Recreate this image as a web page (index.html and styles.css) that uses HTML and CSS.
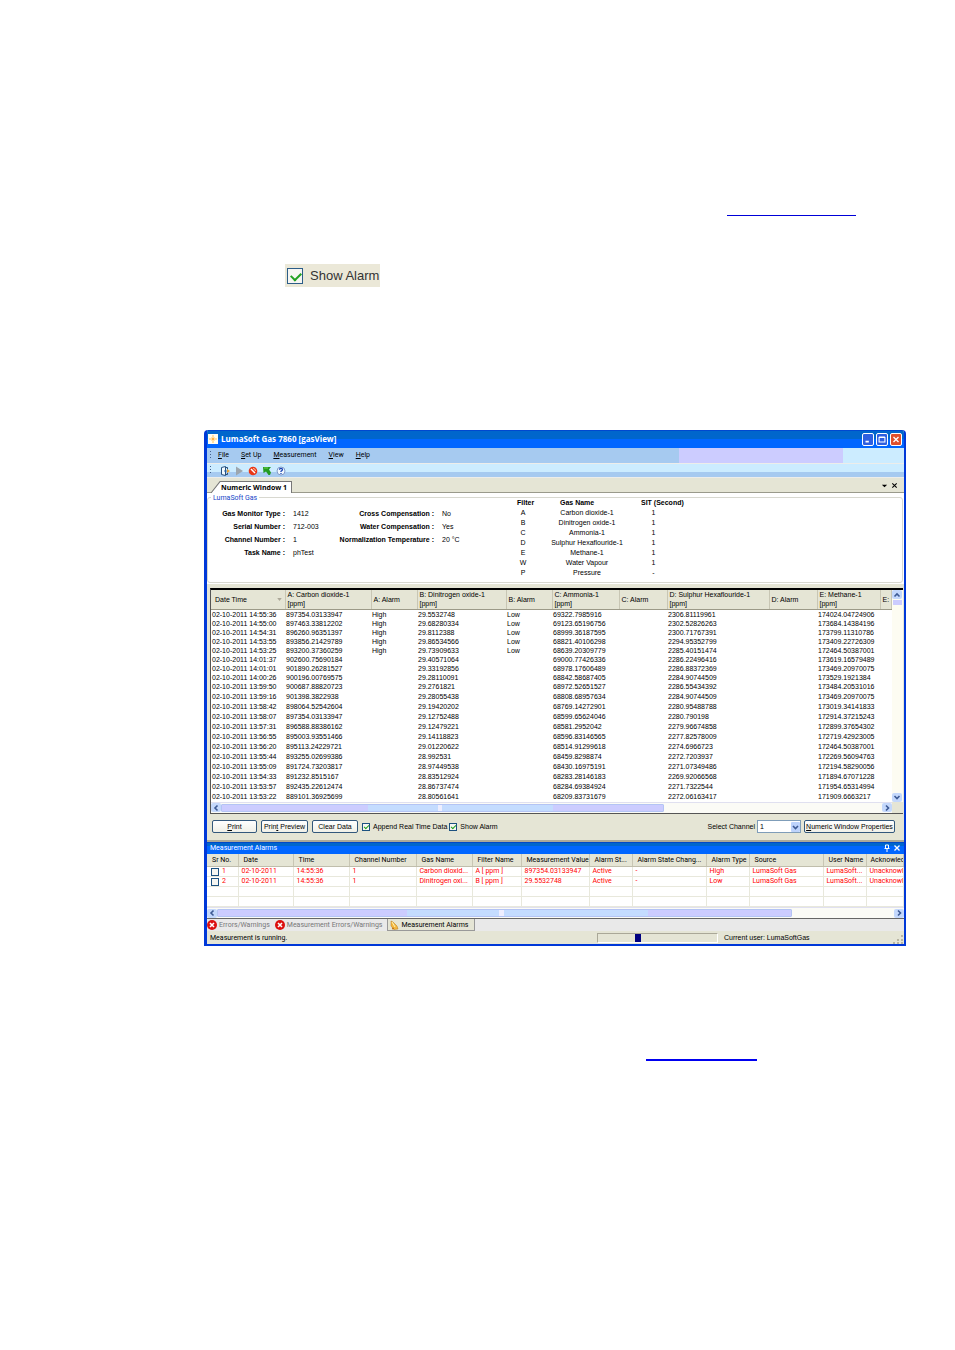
FILE: index.html
```html
<!DOCTYPE html>
<html lang="en">
<head>
<meta charset="utf-8">
<title>LumaSoft Gas 7860 [gasView]</title>
<link rel="stylesheet" href="styles.css">
</head>
<body>
<div class="page-link first"><a href="#numeric"></a></div>
<label class="sample"><input type="checkbox" class="check" checked>Show Alarm</label>

<main class="window" id="numeric">
  <header class="titlebar">
    <svg class="logo" viewBox="0 0 10 10"><rect width="10" height="10" fill="#fffdf0"/><path d="M5 1v8M1 5h8" stroke="#ffc45c"/><path d="M3 3l4 4M7 3L3 7" stroke="#ffe7b0"/><circle cx="5" cy="5" r="1" fill="#ff9d20"/></svg>
    <h1>LumaSoft Gas 7860 [gasView]</h1>
    <div class="win-buttons">
      <button class="win-btn"><svg viewBox="0 0 12 12"><path d="M3 8.500h4" stroke="#fff" stroke-width="2"/></svg></button>
      <button class="win-btn"><svg viewBox="0 0 12 12"><path d="M2.500 3.500h7v5.500h-7zM2.500 3h7" stroke="#fff" fill="none" stroke-width="1.300"/></svg></button>
      <button class="win-btn close"><svg viewBox="0 0 12 12"><path d="M3 3l6 6M9 3l-6 6" stroke="#fff" stroke-width="1.600"/></svg></button>
    </div>
  </header>

  <nav class="menubar">
    <i class="grip"></i>
    <button><u>F</u>ile</button><button><u>S</u>et Up</button><button><u>M</u>easurement</button><button><u>V</u>iew</button><button><u>H</u>elp</button>
    <span class="fill-lilac"></span><span class="fill-sky"></span>
  </nav>

  <div class="toolbar">
    <i class="grip"></i>
    <button><svg viewBox="0 0 10 10"><path d="M1.500 1.500l4-1v9l-4-1z" fill="#f4fbff" stroke="#28507c"/><path d="M6 1.500h1.500v2M7.500 7v1.500H6" stroke="#28507c" fill="none"/><path d="M4 5h4" stroke="#2c68b0"/><path d="M7 3l3 2-3 2z" fill="#e8a030"/></svg></button>
    <button><svg viewBox="0 0 10 10"><path d="M2 .5l7 4.500-7 4.500z" fill="#9da6ae"/></svg></button>
    <button><svg viewBox="0 0 10 10"><circle cx="5" cy="5" r="4.300" fill="#e93716"/><path d="M3 3l4 4" stroke="#fff" stroke-width="1.500"/><path d="M5 2.500a2.500 2.500 0 012.500 2.500" stroke="#ffc0a0" fill="none"/></svg></button>
    <button><svg viewBox="0 0 10 10"><path d="M1 1h8L7 3.500l2 3L8 9 6.500 9 4 5.500 1.500 7z" fill="#239b22"/><path d="M2 2h4" stroke="#72d34c"/></svg></button>
    <button><svg viewBox="0 0 10 10"><circle cx="5" cy="5" r="4" fill="#f2f8ff" stroke="#819bc8"/><path d="M3.500 3.800q0-1.500 1.500-1.500t1.500 1.300q0 .8-1.500 1.700v.7M5 7v1" stroke="#1945b4" stroke-width="1.300" fill="none"/></svg></button>
  </div>

  <div class="tabstrip">
    <button class="doc-tab"><svg viewBox="0 0 10 11" preserveAspectRatio="none"><path d="M0 11L9 .5h1V11z" fill="#fff"/><path d="M0 11L9 .5h1" stroke="#777" fill="none"/></svg><span>Numeric Window 1</span></button>
    <span class="strip-tools">
      <button><svg viewBox="0 0 8 8"><path d="M1 3h6L4 6z"/></svg></button>
      <button><svg viewBox="0 0 8 8"><path d="M1.500 1.500l5 5M6.500 1.500l-5 5" stroke="#000" stroke-width="1.200"/></svg></button>
    </span>
  </div>

  <fieldset class="info">
    <legend>LumaSoft Gas</legend>
    <dl class="facts">
      <dt>Gas Monitor Type :</dt><dd>1412</dd><dt>Cross Compensation :</dt><dd>No</dd>
      <dt>Serial Number :</dt><dd>712-003</dd><dt>Water Compensation :</dt><dd>Yes</dd>
      <dt>Channel Number :</dt><dd>1</dd><dt>Normalization Temperature :</dt><dd>20 °C</dd>
      <dt>Task Name :</dt><dd>phTest</dd>
    </dl>
    <table class="filters">
      <thead><tr><th>Filter</th><th>Gas Name</th><th>SIT (Second)</th></tr></thead>
      <tbody>
      <tr><td>A</td><td>Carbon dioxide-1</td><td>1</td></tr>
      <tr><td>B</td><td>Dinitrogen oxide-1</td><td>1</td></tr>
      <tr><td>C</td><td>Ammonia-1</td><td>1</td></tr>
      <tr><td>D</td><td>Sulphur Hexaflouride-1</td><td>1</td></tr>
      <tr><td>E</td><td>Methane-1</td><td>1</td></tr>
      <tr><td>W</td><td>Water Vapour</td><td>1</td></tr>
      <tr><td>P</td><td>Pressure</td><td>-</td></tr>
      </tbody>
    </table>
  </fieldset>

  <section class="panel">
    <div class="grid-box">
      <div class="grid-view">
      <table class="data">
        <colgroup><col class="w74"><col class="w86"><col class="w46"><col class="w89"><col class="w46"><col class="w67"><col class="w48"><col class="w102"><col class="w48"><col class="w63"><col></colgroup>
        <thead><tr><th><span class="sorted">Date Time <svg viewBox="0 0 6 4"><path d="M0 0h6L3 4z" fill="#aca899"/></svg></span></th><th>A: Carbon dioxide-1<br>[ppm]</th><th>A: Alarm</th><th>B: Dinitrogen oxide-1<br>[ppm]</th><th>B: Alarm</th><th>C: Ammonia-1<br>[ppm]</th><th>C: Alarm</th><th>D: Sulphur Hexaflouride-1<br>[ppm]</th><th>D: Alarm</th><th>E: Methane-1<br>[ppm]</th><th>E:</th></tr></thead>
        <tbody>
        <tr><td>02-10-2011 14:55:36</td><td>897354.03133947</td><td>High</td><td>29.5532748</td><td>Low</td><td>69322.7985916</td><td></td><td>2306.81119961</td><td></td><td>174024.04724906</td><td></td></tr>
        <tr><td>02-10-2011 14:55:00</td><td>897463.33812202</td><td>High</td><td>29.68280334</td><td>Low</td><td>69123.65196756</td><td></td><td>2302.52826263</td><td></td><td>173684.14384196</td><td></td></tr>
        <tr><td>02-10-2011 14:54:31</td><td>896260.96351397</td><td>High</td><td>29.8112388</td><td>Low</td><td>68999.36187595</td><td></td><td>2300.71767391</td><td></td><td>173799.11310786</td><td></td></tr>
        <tr><td>02-10-2011 14:53:55</td><td>893856.21429789</td><td>High</td><td>29.86534566</td><td>Low</td><td>68821.40106298</td><td></td><td>2294.95352799</td><td></td><td>173409.22726309</td><td></td></tr>
        <tr><td>02-10-2011 14:53:25</td><td>893200.37360259</td><td>High</td><td>29.73909633</td><td>Low</td><td>68639.20309779</td><td></td><td>2285.40151474</td><td></td><td>172464.50387001</td><td></td></tr>
        <tr><td>02-10-2011 14:01:37</td><td>902600.75690184</td><td></td><td>29.40571064</td><td></td><td>69000.77426336</td><td></td><td>2286.22496416</td><td></td><td>173619.16579489</td><td></td></tr>
        <tr><td>02-10-2011 14:01:01</td><td>901890.26281527</td><td></td><td>29.33192856</td><td></td><td>68978.17606489</td><td></td><td>2286.88372369</td><td></td><td>173469.20970075</td><td></td></tr>
        <tr><td>02-10-2011 14:00:26</td><td>900196.00769575</td><td></td><td>29.28110091</td><td></td><td>68842.58687405</td><td></td><td>2284.90744509</td><td></td><td>173529.1921384</td><td></td></tr>
        <tr><td>02-10-2011 13:59:50</td><td>900687.88820723</td><td></td><td>29.2761821</td><td></td><td>68972.52651527</td><td></td><td>2286.55434392</td><td></td><td>173484.20531016</td><td></td></tr>
        <tr><td>02-10-2011 13:59:16</td><td>901398.3822938</td><td></td><td>29.28055438</td><td></td><td>68808.68957634</td><td></td><td>2284.90744509</td><td></td><td>173469.20970075</td><td></td></tr>
        <tr><td>02-10-2011 13:58:42</td><td>898064.52542604</td><td></td><td>29.19420202</td><td></td><td>68769.14272901</td><td></td><td>2280.95488788</td><td></td><td>173019.34141833</td><td></td></tr>
        <tr><td>02-10-2011 13:58:07</td><td>897354.03133947</td><td></td><td>29.12752488</td><td></td><td>68599.65624046</td><td></td><td>2280.790198</td><td></td><td>172914.37215243</td><td></td></tr>
        <tr><td>02-10-2011 13:57:31</td><td>896588.88386162</td><td></td><td>29.12479221</td><td></td><td>68581.2952042</td><td></td><td>2279.96674858</td><td></td><td>172899.37654302</td><td></td></tr>
        <tr><td>02-10-2011 13:56:55</td><td>895003.93551466</td><td></td><td>29.14118823</td><td></td><td>68596.83146565</td><td></td><td>2277.82578009</td><td></td><td>172719.42923005</td><td></td></tr>
        <tr><td>02-10-2011 13:56:20</td><td>895113.24229721</td><td></td><td>29.01220622</td><td></td><td>68514.91299618</td><td></td><td>2274.6966723</td><td></td><td>172464.50387001</td><td></td></tr>
        <tr><td>02-10-2011 13:55:44</td><td>893255.02699386</td><td></td><td>28.992531</td><td></td><td>68459.8298874</td><td></td><td>2272.7203937</td><td></td><td>172269.56094763</td><td></td></tr>
        <tr><td>02-10-2011 13:55:09</td><td>891724.73203817</td><td></td><td>28.97449538</td><td></td><td>68430.16975191</td><td></td><td>2271.07349486</td><td></td><td>172194.58290056</td><td></td></tr>
        <tr><td>02-10-2011 13:54:33</td><td>891232.8515167</td><td></td><td>28.83512924</td><td></td><td>68283.28146183</td><td></td><td>2269.92066568</td><td></td><td>171894.67071228</td><td></td></tr>
        <tr><td>02-10-2011 13:53:57</td><td>892435.22612474</td><td></td><td>28.86737474</td><td></td><td>68284.69384924</td><td></td><td>2271.7322544</td><td></td><td>171954.65314994</td><td></td></tr>
        <tr><td>02-10-2011 13:53:22</td><td>889101.36925699</td><td></td><td>28.80561641</td><td></td><td>68209.83731679</td><td></td><td>2272.06163417</td><td></td><td>171909.6663217</td><td></td></tr>
        </tbody>
      </table>
      </div>
      <div class="vscroll">
        <button class="sb"><svg viewBox="0 0 8 8"><path d="M1.500 5.500L4 3l2.500 2.500" stroke="#3d5a94" stroke-width="1.600" fill="none"/></svg></button>
        <span class="vthumb"></span>
        <button class="sb low"><svg viewBox="0 0 8 8"><path d="M1.500 3L4 5.500 6.500 3" stroke="#3d5a94" stroke-width="1.600" fill="none"/></svg></button>
      </div>
      <div class="hscroll">
        <button class="sb"><svg viewBox="0 0 8 8"><path d="M5.500 1.500L3 4l2.500 2.500" stroke="#3d5a94" stroke-width="1.600" fill="none"/></svg></button>
        <span class="track"><span class="thumb main-thumb"></span></span>
        <button class="sb"><svg viewBox="0 0 8 8"><path d="M3 1.500L5.500 4 3 6.500" stroke="#3d5a94" stroke-width="1.600" fill="none"/></svg></button>
      </div>
      <span class="corner"></span>
    </div>
    <div class="actions">
      <button class="push w45"><u>P</u>rint</button>
      <button class="push w47">Prin<u>t</u> Preview</button>
      <button class="push w46b">Clear Data</button>
      <label class="opt"><input type="checkbox" class="check" checked>Append Real Time Data</label>
      <label class="opt"><input type="checkbox" class="check" checked>Show Alarm</label>
      <label class="channel" for="channel">Select Channel</label>
      <span class="combo"><select id="channel"><option>1</option></select><svg viewBox="0 0 9 10"><rect width="9" height="10" rx="1" fill="#bdd3fc"/><path d="M2 4l2.500 2.500L7 4" stroke="#3d5a94" stroke-width="1.600" fill="none"/></svg></span>
      <button class="push w91"><u>N</u>umeric Window Properties</button>
    </div>
  </section>

  <section class="alarms">
    <header class="alarm-title"><h2>Measurement Alarms</h2>
      <button><svg viewBox="0 0 8 8"><path d="M2.500 1h3v3.500h-3zM1.500 4.500h5M4 4.500V8" stroke="#fff" fill="none"/></svg></button>
      <button><svg viewBox="0 0 8 8"><path d="M1.500 1.500l5 5M6.500 1.500l-5 5" stroke="#fff" stroke-width="1.300"/></svg></button>
    </header>
    <table class="alarm-table">
      <colgroup><col class="w31"><col class="w55"><col class="w56"><col class="w67"><col class="w56"><col class="w49"><col class="w68"><col class="w43"><col class="w74"><col class="w43"><col class="w74"><col class="w43"><col></colgroup>
      <thead><tr><th>Sr No.</th><th>Date</th><th>Time</th><th>Channel Number</th><th>Gas Name</th><th>Filter Name</th><th>Measurement Value</th><th>Alarm St...</th><th>Alarm State Chang...</th><th>Alarm Type</th><th>Source</th><th>User Name</th><th>Acknowled</th></tr></thead>
      <tbody>
      <tr><td><label class="row-pick"><input type="checkbox" class="check">1</label></td><td>02-10-2011</td><td>14:55:36</td><td>1</td><td>Carbon dioxid...</td><td>A [ ppm ]</td><td>897354.03133947</td><td>Active</td><td>-</td><td>High</td><td>LumaSoft Gas</td><td>LumaSoft...</td><td>Unacknowl</td></tr>
      <tr><td><label class="row-pick"><input type="checkbox" class="check">2</label></td><td>02-10-2011</td><td>14:55:36</td><td>1</td><td>Dinitrogen oxi...</td><td>B [ ppm ]</td><td>29.5532748</td><td>Active</td><td>-</td><td>Low</td><td>LumaSoft Gas</td><td>LumaSoft...</td><td>Unacknowl</td></tr>
      <tr><td></td><td></td><td></td><td></td><td></td><td></td><td></td><td></td><td></td><td></td><td></td><td></td><td></td></tr>
      <tr><td></td><td></td><td></td><td></td><td></td><td></td><td></td><td></td><td></td><td></td><td></td><td></td><td></td></tr>
      </tbody>
    </table>
    <div class="hscroll">
      <button class="sb"><svg viewBox="0 0 8 8"><path d="M5.500 1.500L3 4l2.500 2.500" stroke="#3d5a94" stroke-width="1.600" fill="none"/></svg></button>
      <span class="track"><span class="thumb alarm-thumb"></span></span>
      <button class="sb"><svg viewBox="0 0 8 8"><path d="M3 1.500L5.500 4 3 6.500" stroke="#3d5a94" stroke-width="1.600" fill="none"/></svg></button>
    </div>
  </section>

  <div class="bottom-tabs">
    <button><svg viewBox="0 0 10 10"><circle cx="5" cy="5" r="5" fill="#dc1010"/><path d="M3 3l4 4M7 3L3 7" stroke="#fff" stroke-width="1.600"/></svg>Errors/Warnings</button>
    <button><svg viewBox="0 0 10 10"><circle cx="5" cy="5" r="5" fill="#dc1010"/><path d="M3 3l4 4M7 3L3 7" stroke="#fff" stroke-width="1.600"/></svg>Measurement Errors/Warnings</button>
    <button class="active"><svg viewBox="0 0 10 10"><path d="M2 1l2 1 4 4 1 3-4 .5L2 6z" fill="#f4b840" stroke="#b87818" stroke-width=".5"/><path d="M3 2l3 5" stroke="#fff3b0"/><circle cx="4" cy="8.500" r="1" fill="#c07010"/></svg>Measurement Alarms</button>
  </div>

  <footer class="status">
    <span class="message">Measurement is running.</span>
    <span class="progress"><span></span></span>
    <span class="user">Current user: LumaSoftGas</span>
    <svg class="resize" viewBox="0 0 12 12"><path d="M9 3h2v2H9zM5 7h2v2H5zM9 7h2v2H9zM1 10h2v2H1zM5 10h2v2H5zM9 10h2v2H9z" fill="#b8b4a2"/></svg>
  </footer>
</main>
<div class="page-link second"><a href="#numeric"></a></div>
</body>
</html>
```
FILE: styles.css
```css
:root {
  --ui: "Liberation Sans", Arial, sans-serif;
  --tahoma: Roboto, "Liberation Sans", sans-serif;
  --title: "Open Sans", "Noto Sans", sans-serif;
  --beige: #e5e5d5;
}
* { box-sizing: border-box; }
body { margin: 0; padding: 215px 49px 80px 204px; background: #fff; color: #000; font: 7px/10px var(--ui); }
button { margin: 0; padding: 0; border: 0; background: none; color: inherit; font: inherit; white-space: nowrap; }
svg { display: block; flex: none; }
h1, h2, dl, dd { margin: 0; }
table { border-collapse: collapse; border-spacing: 0; }
th, td { padding: 0; font-weight: normal; text-align: left; white-space: nowrap; }
u { text-underline-offset: 1px; }

.page-link { display: flex; }
.page-link a { display: block; height: 1px; }
.first { padding-left: 523px; }
.first a { width: 129px; background: #0000d8; }
.second { padding-left: 442px; margin-top: 113px; }
.second a { width: 111px; height: 2px; background: #0000f0; }

.check { appearance: none; flex: none; margin: 0; width: 8px; height: 8px; border: 1px solid #1c5180; background: #f6f6f2; }
.check:checked::after { content: ""; display: block; width: 4px; height: 2px; margin: 1px; border: solid #21a121; border-width: 0 0 1px 1px; rotate: -45deg; }

.sample { display: flex; align-items: center; gap: 7px; width: 95px; height: 23px; margin: 48px 0 143px 81px; padding-left: 2px; background: #ebe8d8; font-size: 13px; line-height: 23px; color: #333; white-space: nowrap; }
.sample .check { width: 16px; height: 16px; border-color: #2c5d88; }
.sample .check:checked::after { width: 8px; height: 5px; margin: 3px; border-width: 0 0 2px 2px; }

.window { border: solid #0038d8; border-width: 0 2px 2px 3px; border-radius: 4px 4px 0 0; overflow: hidden; background: var(--beige); }

.titlebar { display: flex; align-items: center; gap: 3px; height: 18px; padding: 0 2px 0 1px; background: linear-gradient(#0048d0 0 1px, #0066cc 1px 9px, #0066ff 9px); color: #fff; }
.logo { width: 10px; height: 10px; }
.titlebar h1 { font: bold 8px/18px var(--title); }
.win-buttons { display: flex; gap: 2px; margin-left: auto; }
.win-btn { width: 12px; height: 13px; border: 1px solid #fff; border-radius: 2px; background: #2e5fe0; }
.win-btn svg { width: 10px; height: 11px; }
.win-btn.close { background: #e0502c; }

.menubar { display: flex; align-items: center; gap: 12px; height: 15px; padding-left: 3px; background: #a6caf0; }
.grip { width: 1px; height: 9px; margin-right: -5px; background: repeating-linear-gradient(#44618c 0 1px, transparent 1px 3px); }
.menubar button { font: 7px/15px var(--tahoma); }
.fill-lilac, .fill-sky { align-self: stretch; }
.fill-lilac { width: 164px; margin-left: auto; background: #ccccff; }
.fill-sky { width: 61px; margin-left: -12px; background: #ccecff; }

.toolbar { display: flex; align-items: center; gap: 4px; height: 15px; padding-left: 3px; border: solid; border-width: 1px 0; border-color: #ededea #5f7898; background: linear-gradient(#ccecff 0 8px, #a6caf0 8px); }
.toolbar .grip { margin-right: 5px; }
.toolbar svg { width: 10px; height: 10px; }

.tabstrip { display: flex; align-items: flex-end; height: 15px; padding: 0 6px 0 4px; border-bottom: 1px solid #9a9a8c; }
.doc-tab { display: flex; height: 12px; margin-bottom: -1px; font: bold 7px/12px var(--title); }
.doc-tab svg { width: 10px; height: 12px; }
.doc-tab span { padding-right: 4px; border: solid #777; border-width: 1px 1px 0 0; background: #fff; line-height: 11px; }
.strip-tools { display: flex; gap: 3px; margin: 0 0 3px auto; }
.strip-tools svg { width: 7px; height: 7px; }

.info { position: relative; display: flex; height: 91px; margin: 0; padding: 4px 0 0; border: 0; background: #fff; min-width: 0; }
.info::before { content: ""; position: absolute; inset: 4px 1px 1px 0; border: 1px solid #d8d8d0; border-radius: 3px; }
.info legend { position: absolute; top: 0; left: 4px; padding: 0 2px; background: #fff; color: #1646c8; font: 7px/10px var(--tahoma); }
.facts { display: grid; grid-template-columns: 78px 36px 97px 60px; grid-auto-rows: 13px; gap: 0 8px; padding-top: 10px; line-height: 13px; white-space: nowrap; }
.facts dt { display: flex; justify-content: flex-end; font-weight: bold; }
.filters { margin: 1px 0 0 3px; align-self: flex-start; line-height: 10px; }
.filters th { font-weight: bold; }
.filters th:first-child { width: 36px; padding-left: 12px; }
.filters th:nth-child(2) { width: 92px; padding-left: 19px; }
.filters th:nth-child(3) { padding-left: 8px; }
.filters td { text-align: center; }
.filters td:last-child { padding-right: 10px; }

.panel { padding: 4px 1px 0 3px; }
.grid-box { display: grid; grid-template-columns: minmax(0, 1fr) 11px; border: solid #555; border-width: 2px 0 1px 1px; border-top-color: #000; background: #fff; }
.grid-view { overflow: hidden; }
.data { width: 100%; table-layout: fixed; }
.data th { height: 19px; padding-left: 2px; border-right: 1px solid #c8c6b4; border-bottom: 1px solid #9c9a88; background: var(--beige); line-height: 9px; overflow: hidden; }
.data th:first-child { padding-left: 4px; }
.data td { height: 10px; padding-left: 1px; line-height: 9px; }
.data tr:nth-child(-n+8) td { height: 9px; }
.sorted { display: flex; align-items: center; justify-content: space-between; padding-right: 3px; }
.sorted svg { width: 5px; height: 3px; }
.w31 { width: 31px; } .w43 { width: 43px; } .w46 { width: 46px; } .w48 { width: 48px; }
.w49 { width: 49px; } .w55 { width: 55px; } .w56 { width: 56px; } .w63 { width: 63px; }
.w67 { width: 67px; } .w68 { width: 68px; } .w74 { width: 74px; } .w86 { width: 86px; }
.w89 { width: 89px; } .w102 { width: 102px; }

.vscroll { display: flex; flex-direction: column; background: #fdfcf2; }
.vthumb { height: 5px; margin: 1px 1px 0; background: #ccccff; }
.sb { flex: none; display: grid; place-items: center; width: 10px; height: 9px; border-radius: 2px; background: #c4d8fc; }
.sb svg { width: 8px; height: 8px; }
.low { margin-top: auto; }
.hscroll { display: flex; height: 11px; align-items: center; border-top: 1px solid #e0e0f0; background: #fbfbf6; }
.track { flex: 1; }
.thumb { display: block; height: 8px; border: 1px solid #b4c4f4; border-radius: 1px; background: linear-gradient(90deg, transparent 49%, #eef 49% 50%, transparent 50%), linear-gradient(90deg, #ccccff 33%, #c4dcff 33% 75%, #ccccff 75%); }
.main-thumb { width: 67%; }
.alarm-thumb { width: 85%; }
.corner { background: var(--beige); }

.actions { display: flex; align-items: center; height: 26px; padding: 0 8px 0 2px; }
.push { height: 13px; border: 1px solid #33587c; border-radius: 2px; background: linear-gradient(#fff, #f0f0e8); line-height: 11px; }
.w45 { width: 45px; margin-right: 4px; } .w47 { width: 47px; margin-right: 4px; }
.w46b { width: 46px; margin-right: 4px; } .w91 { width: 91px; margin-left: 3px; }
.opt { display: flex; align-items: center; gap: 3px; margin-right: 2px; white-space: nowrap; }
.channel { margin-left: auto; padding-right: 2px; }
.combo { display: flex; align-items: center; width: 44px; height: 13px; border: 1px solid #7f9db9; background: #fff; }
.combo select { appearance: none; flex: 1; min-width: 0; height: 11px; padding: 0 0 0 2px; border: 0; background: none; font: inherit; }
.combo svg { width: 9px; height: 10px; }

.alarms { border-top: 2px solid #aaa898; background: #fff; overflow: hidden; font: 7px/10px var(--tahoma); }
.alarm-title { display: flex; align-items: center; gap: 2px; height: 12px; padding: 0 3px; background: linear-gradient(#0048c8 0 1px, #0066cc 1px 4px, #0066ff 4px); color: #fff; }
.alarm-title h2 { flex: 1; font: inherit; }
.alarm-title svg { width: 8px; height: 8px; }
.alarm-table { width: 100%; table-layout: fixed; }
.alarm-table th { height: 13px; padding-left: 5px; border-right: 1px solid #c8c6b4; border-bottom: 1px solid #c0beac; background: var(--beige); overflow: hidden; }
.alarm-table td { height: 10px; padding-left: 3px; border: solid #e8e8dc; border-width: 0 1px 1px 0; color: #f00; overflow: hidden; line-height: 9px; }
.alarm-table th:last-child { padding-left: 4px; }
.row-pick { display: flex; align-items: center; gap: 3px; margin-left: 1px; }

.bottom-tabs { display: flex; height: 13px; border-top: 1px solid #666; background: #e9e9e9; color: #777; font: 7px/12px var(--tahoma); }
.bottom-tabs button { display: flex; align-items: center; gap: 2px; height: 12px; padding: 0 5px 0 0; }
.bottom-tabs .active { padding: 0 5px 0 1px; border: 1px solid #999; border-top: 0; background: var(--beige); color: #000; }
.bottom-tabs svg { width: 10px; height: 10px; }

.status { display: flex; align-items: center; height: 13px; padding-left: 3px; }
.message { flex: 1; font: 7px/12px var(--tahoma); }
.progress { width: 121px; height: 10px; padding: 0 0 0 37px; border: 1px solid; border-color: #aaa898 #fff #fff #aaa898; }
.progress span { display: block; width: 6px; height: 8px; background: #000080; }
.user { width: 174px; padding-left: 6px; }
.resize { width: 12px; height: 12px; }
```
